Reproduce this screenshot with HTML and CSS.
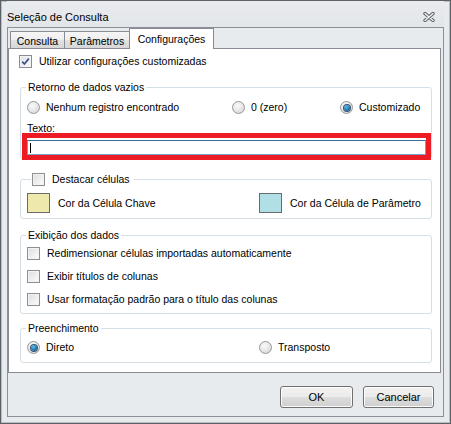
FILE: index.html
```html
<!DOCTYPE html>
<html lang="pt-BR">
<head>
  <meta charset="UTF-8" />
  <title>Seleção de Consulta</title>
  <link rel="stylesheet" href="styles.css">
</head>
<body>
<div class="window">
  <div class="titlebar">
    <span class="title">Seleção de Consulta</span>
    <svg class="close" width="12" height="10" viewBox="0 0 12 10">
      <path d="M2 1.5 L10 8.5 M10 1.5 L2 8.5" stroke="#5b5f66" stroke-width="3.4" stroke-linecap="round" fill="none"/>
      <path d="M2 1.5 L10 8.5 M10 1.5 L2 8.5" stroke="#f4f5f7" stroke-width="1.4" stroke-linecap="round" fill="none"/>
    </svg>
  </div>

  <div class="client">
    <div class="tabs">
      <div class="tab tab-consulta">Consulta</div>
      <div class="tab tab-param">Parâmetros</div>
      <div class="tab tab-config active">Configurações</div>
    </div>

    <div class="panel">
      <label class="check top-check">
        <span class="box checked">
          <svg width="9" height="9" viewBox="0 0 9 9"><path d="M1.2 4.6 L3.4 7 L7.8 1.6" stroke="#3d5288" stroke-width="1.7" fill="none"/></svg>
        </span>
        Utilizar configurações customizadas
      </label>

      <fieldset class="group retorno">
        <legend>Retorno de dados vazios</legend>
        <div class="radio-row">
          <label class="radio"><span class="dot"></span>Nenhum registro encontrado</label>
          <label class="radio"><span class="dot"></span>0 (zero)</label>
          <label class="radio"><span class="dot on"></span>Customizado</label>
        </div>
        <div class="field-label">Texto:</div>
        <div class="textbox"><span class="caret"></span></div>
        <div class="highlight"></div>
      </fieldset>

      <fieldset class="group destacar">
        <legend><label class="check"><span class="box"></span>Destacar células</label></legend>
        <div class="swatches">
          <div class="swatch-item"><span class="swatch chave"></span>Cor da Célula Chave</div>
          <div class="swatch-item"><span class="swatch param"></span>Cor da Célula de Parâmetro</div>
        </div>
      </fieldset>

      <fieldset class="group exibicao">
        <legend>Exibição dos dados</legend>
        <label class="check"><span class="box"></span>Redimensionar células importadas automaticamente</label>
        <label class="check"><span class="box"></span>Exibir títulos de colunas</label>
        <label class="check"><span class="box"></span>Usar formatação padrão para o título das colunas</label>
      </fieldset>

      <fieldset class="group preenchimento">
        <legend>Preenchimento</legend>
        <div class="radio-row fill-row">
          <label class="radio"><span class="dot on"></span>Direto</label>
          <label class="radio"><span class="dot"></span>Transposto</label>
        </div>
      </fieldset>
    </div>

    <div class="buttons">
      <button class="btn btn-ok">OK</button>
      <button class="btn btn-cancel">Cancelar</button>
    </div>
  </div>
</div>
</body>
</html>
```

FILE: styles.css
```css
html, body {
  margin: 0;
  padding: 0;
  background: #e9ebee;
  font-family: "Liberation Sans", Arial, sans-serif;
  font-size: 10.5px;
  color: #000;
}

.window {
  width: 451px;
  height: 424px;
  box-sizing: border-box;
  border: 1px solid #5c6168;
  box-shadow: inset 1px 1px 0 #b9bec5, inset -1px -1px 0 #b9bec5;
  background: #e8ebee;
  padding: 0 6px 6px 6px;
  display: flex;
  flex-direction: column;
}

.titlebar {
  height: 26px;
  display: flex;
  align-items: center;
  justify-content: space-between;
  background: linear-gradient(#e9ebee, #e3e6e9);
}

.title {
  font-size: 11px;
  margin-top: 5px;
}

.close {
  margin-right: 9px;
  margin-top: 6px;
}

/* client frame */
.client {
  height: 390px;
  box-sizing: border-box;
  border: 1px solid #8b9097;
  background: #e8ebee;
  display: flex;
  flex-direction: column;
}

.tabs {
  height: 20px;
  display: flex;
  align-items: flex-end;
  padding-left: 2px;
}

.tab {
  height: 17px;
  box-sizing: border-box;
  border: 1px solid #898c95;
  border-bottom: none;
  background: linear-gradient(#f6f6f6, #eeeeee 50%, #e2e2e2 51%, #d6d6d6);
  text-align: center;
  line-height: 14px;
  padding-top: 2px;
}

.tab + .tab {
  margin-left: -1px;
}

.tab-consulta { width: 55px; }
.tab-param { width: 66px; }

.tab-config {
  width: 85px;
}

.tab.active {
  height: 21px;
  margin-bottom: -1px;
  background: #fff;
  position: relative;
  z-index: 1;
  padding-top: 3px;
}

.panel {
  height: 325px;
  box-sizing: border-box;
  margin-right: 2px;
  border: 1px solid #898c95;
  background: #fff;
  display: flex;
  flex-direction: column;
  padding: 6px 8px 0 10px;
}

/* checkbox + radio */
.check, .radio {
  display: flex;
  align-items: center;
  height: 13px;
  line-height: 13px;
  white-space: nowrap;
}

.box {
  width: 13px;
  height: 13px;
  box-sizing: border-box;
  border: 1px solid #8f8f8f;
  background: linear-gradient(135deg, #dcdcdc, #f4f4f4 70%, #fbfbfb);
  box-shadow: inset 0 0 0 1px #f3f3f3;
  margin-right: 7px;
  flex: none;
  display: flex;
  align-items: center;
  justify-content: center;
}

.box.checked {
  background: linear-gradient(135deg, #e2e4ea, #f6f7f9);
  border-color: #8a8d95;
}

.box svg {
  display: block;
}

.top-check {
  margin-bottom: 13px;
}

.dot {
  width: 13px;
  height: 13px;
  box-sizing: border-box;
  border-radius: 50%;
  border: 1px solid #979797;
  background: radial-gradient(circle at 40% 35%, #fafafa, #e3e3e3 60%, #cfcfcf);
  margin-right: 6px;
  flex: none;
  display: flex;
  align-items: center;
  justify-content: center;
}

.dot.on::after {
  content: "";
  width: 6px;
  height: 6px;
  border-radius: 50%;
  background: radial-gradient(circle at 40% 35%, #5fc0f0, #1a6fa8 60%, #0d3e68);
  box-shadow: 0 0 0 1px #3b5470;
}

/* group boxes */
.group {
  margin: 0 0 0 1px;
  padding: 0 6px;
  min-width: 0;
  border: 1px solid #d5dfe5;
  border-radius: 3px;
  position: relative;
}

.group legend {
  margin-left: -1px;
  padding: 0 2px;
  height: 13px;
  line-height: 13px;
}

.retorno {
  padding-bottom: 3px;
}

.retorno .radio-row {
  margin-top: 7px;
  display: grid;
  grid-template-columns: 205px 108px auto;
}

.field-label {
  margin-top: 8px;
  height: 13px;
  line-height: 13px;
}

.textbox {
  margin-top: 5px;
  height: 15px;
  box-sizing: border-box;
  border: 1px solid #7aa0c8;
  border-top-color: #3d6c9e;
  background: #fff;
  margin-right: -1px;
  display: flex;
  align-items: center;
}

.caret {
  width: 1px;
  height: 10px;
  background: #000;
  margin-left: 2px;
}

/* annotation frame drawn over the text box */
.highlight {
  position: absolute;
  left: 1px;
  top: 39px;
  width: 409px;
  height: 27px;
  box-sizing: border-box;
  border: 5px solid #ed1c24;
}

.destacar {
  margin-top: 14px;
  padding-bottom: 5px;
}

.destacar legend {
  padding: 0 4px 0 1px;
  margin-left: 4px;
}

.swatches {
  margin-top: 7px;
  display: grid;
  grid-template-columns: 232px auto;
}

.swatch-item {
  display: flex;
  align-items: center;
  white-space: nowrap;
}

.swatch {
  width: 23px;
  height: 20px;
  box-sizing: border-box;
  border: 1px solid #6b6b6b;
  margin-right: 8px;
}

.swatch.chave { background: #eee8aa; }
.swatch.param { background: #b0e0e6; }

.exibicao {
  margin-top: 10px;
  padding-bottom: 7px;
}

.exibicao .check {
  margin-top: 10px;
}

.exibicao legend + .check {
  margin-top: 5px;
}

.preenchimento {
  margin-top: 8px;
  padding-bottom: 8px;
}

.fill-row {
  margin-top: 6px;
  display: grid;
  grid-template-columns: 232px auto;
}

/* dialog buttons */
.buttons {
  flex: 1;
  display: flex;
  justify-content: flex-end;
  align-items: flex-start;
  gap: 10px;
  padding: 13px 9px 0 0;
}

.btn {
  height: 22px;
  font-family: inherit;
  font-size: 11px;
  color: #000;
  border: 1px solid #707070;
  border-radius: 3px;
  background: linear-gradient(#f2f2f2, #ebebeb 50%, #dddddd 51%, #cfcfcf);
  box-shadow: inset 0 0 0 1px #fcfcfc;
  padding: 0;
}

.btn-ok { width: 73px; }
.btn-cancel { width: 71px; }
```
